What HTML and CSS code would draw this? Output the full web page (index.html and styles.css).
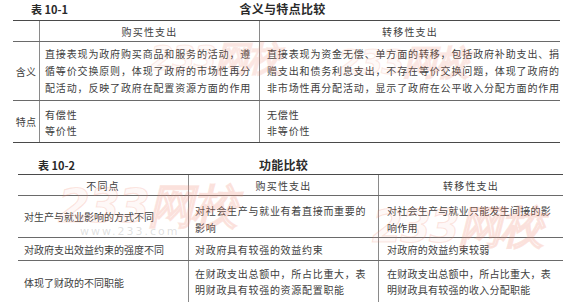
FILE: index.html
```html
<!DOCTYPE html>
<html lang="zh">
<head>
<meta charset="utf-8">
<link rel="stylesheet" href="styles.css">
</head>
<body>
<div class="page">
  <div class="caption cap1">
    <span class="num">表 10-1</span>
    <span class="title">含义与特点比较</span>
    <span></span>
  </div>
  <div class="tbl t1">
    <div class="row head">
      <div class="cell"></div>
      <div class="cell center">购买性支出</div>
      <div class="cell center">转移性支出</div>
    </div>
    <div class="row r1">
      <div class="cell label">含义</div>
      <div class="cell txt pl5">直接表现为政府购买商品和服务的活动，遵<br>循等价交换原则，体现了政府的市场性再分<br>配活动，反映了政府在配置资源方面的作用</div>
      <div class="cell txt pl8">直接表现为资金无偿、单方面的转移，包括政府补助支出、捐<br>赠支出和债务利息支出，不存在等价交换问题，体现了政府的<br>非市场性再分配活动，显示了政府在公平收入分配方面的作用</div>
    </div>
    <div class="row r2">
      <div class="cell label">特点</div>
      <div class="cell txt pl5 lh16">有偿性<br>等价性</div>
      <div class="cell txt pl8 lh16">无偿性<br>非等价性</div>
    </div>
  </div>

  <div class="caption cap2">
    <span class="num">表 10-2</span>
    <span class="title">功能比较</span>
    <span></span>
  </div>
  <div class="tbl t2">
    <div class="row head">
      <div class="cell center">不同点</div>
      <div class="cell center">购买性支出</div>
      <div class="cell center">转移性支出</div>
    </div>
    <div class="row s1">
      <div class="cell mid ca">对生产与就业影响的方式不同</div>
      <div class="cell txt cb">对社会生产与就业有着直接而重要的<br>影响</div>
      <div class="cell txt cc">对社会生产与就业只能发生间接的影<br>响作用</div>
    </div>
    <div class="row s2">
      <div class="cell mid ca">对政府支出效益约束的强度不同</div>
      <div class="cell mid cb">对政府具有较强的效益约束</div>
      <div class="cell mid cc">对政府的效益约束较弱</div>
    </div>
    <div class="row s3">
      <div class="cell ca lab3">体现了财政的不同职能</div>
      <div class="cell txt cb lh16">在财政支出总额中，所占比重大，表<br>明财政具有较强的资源配置职能</div>
      <div class="cell txt cc lh16">在财政支出总额中，所占比重大，表<br>明财政具有较强的收入分配职能</div>
    </div>
  </div>

  <div class="wm wm1">233网校</div>
  <div class="wm wm2">233网校</div>
  <div class="wm wm3">233网校</div>
  <div class="wm wm4">233网校</div>
  <div class="wmurl">www.233.com</div>
</div>
</body>
</html>
```
FILE: styles.css
```css
html, body {
  margin: 0;
  padding: 0;
  background: #ffffff;
}
.page {
  position: relative;
  width: 573px;
  height: 302px;
  overflow: hidden;
  font-family: "Noto Sans CJK SC", "Noto Sans", sans-serif;
  color: #404040;
  font-size: 10px;
}
.caption {
  display: grid;
  grid-template-columns: 1fr auto 1fr;
  align-items: start;
  font-weight: 700;
  color: #2a2a2a;
  box-sizing: border-box;
}
.caption .num {
  font-size: 11px;
  line-height: 18px;
}
.caption .title {
  font-size: 12px;
  letter-spacing: 0.3px;
  line-height: 18px;
  position: relative;
}
.cap1 {
  height: 20px;
}
.cap1 .num { padding-left: 31px; }
.cap1 .title { left: -4px; }
.cap2 {
  height: 31px;
  padding-top: 13px;
}
.cap2 .num { padding-left: 38px; }
.cap2 .title { left: -3px; }

.tbl {
  border-top: 1px solid #4a4a4a;
}
.t1 {
  margin-left: 13px;
  width: 547px;
}
.t2 {
  margin-left: 18px;
  width: 545px;
}
.row {
  display: grid;
  box-sizing: border-box;
  border-bottom: 1px solid #6a6a6a;
}
.t1 .row { grid-template-columns: 26px 220px 301px; }
.t2 .row { grid-template-columns: 170px 190px 185px; }
.cell {
  box-sizing: border-box;
  white-space: nowrap;
  letter-spacing: 0.85px;
}
.cell + .cell {
  border-left: 1px solid #8a8a8a;
}
.head {
  height: 21px;
}
.head .cell {
  display: flex;
  align-items: center;
  justify-content: center;
  letter-spacing: 1.2px;
}
.center { text-align: center; }
.label {
  display: flex;
  align-items: center;
  justify-content: center;
  letter-spacing: 0.3px;
}
.txt { line-height: 17px; }
.lh16 { line-height: 16px; }
.mid {
  display: flex;
  align-items: center;
}
.pl5 { padding-left: 5px; }
.pl8 { padding-left: 7px; }

.r1 { height: 59px; }
.r1 .txt { padding-top: 3px; }
.r2 { height: 42px; border-bottom-color: #4a4a4a; }
.r2 .txt { padding-top: 6px; }

.ca { padding-left: 6px; letter-spacing: 0; }
.cb { padding-left: 6px; letter-spacing: 0.7px; }
.cc { padding-left: 8px; letter-spacing: 0.25px; }

.s1 { height: 42px; }
.s1 .txt { padding-top: 6px; }
.s2 { height: 23px; }
.s3 { height: 44px; border-bottom: none; }
.s3 .txt { padding-top: 5px; }
.lab3 { padding-top: 13px; line-height: 17px; }

.wm {
  position: absolute;
  font-family: "DejaVu Sans", sans-serif;
  font-weight: 700;
  font-style: italic;
  color: rgba(252, 190, 170, 0.10);
  -webkit-text-stroke: 1.2px rgba(240, 130, 105, 0.2);
  letter-spacing: -2px;
  white-space: nowrap;
  pointer-events: none;
}
.wm1 { left: 150px; top: 36px; font-size: 34px; opacity: 0.8; }
.wm2 { left: 338px; top: 40px; font-size: 34px; opacity: 0.8; }
.wm3 { left: 58px; top: 176px; font-size: 46px; }
.wm4 { left: 372px; top: 198px; font-size: 44px; }
.wmurl {
  position: absolute;
  left: 80px;
  top: 225px;
  font-family: "DejaVu Sans", sans-serif;
  font-size: 11px;
  letter-spacing: 2px;
  color: rgba(150, 150, 150, 0.3);
}
```
